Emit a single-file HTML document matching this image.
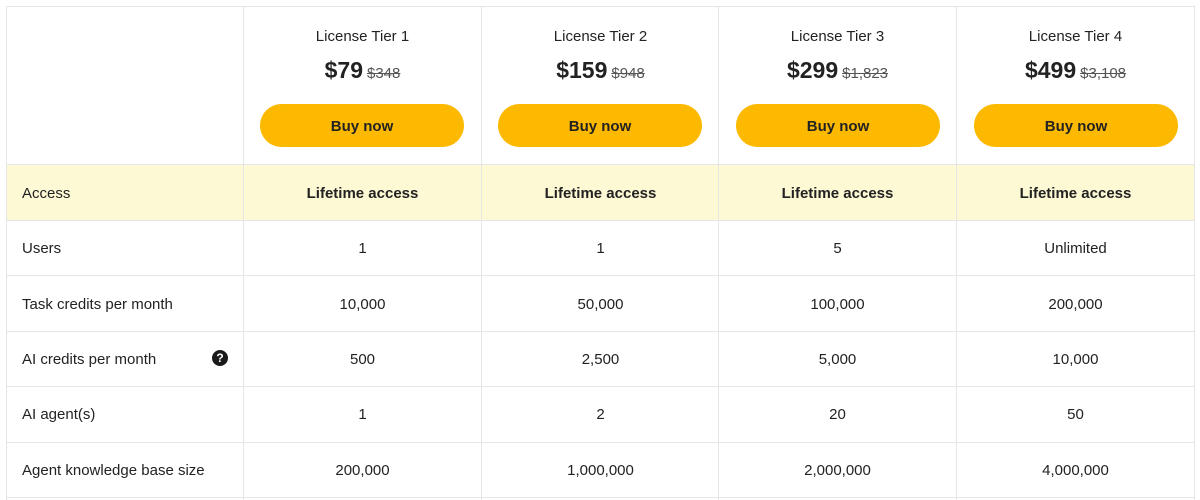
<!DOCTYPE html>
<html><head><style>
body{margin:0;width:1200px;height:500px;background:#fff;font-family:"Liberation Sans",Arial,sans-serif;color:#222;position:relative;overflow:hidden}
.v{position:absolute;top:6px;bottom:0;width:1px;background:#e6e6e6}
.h{position:absolute;left:6px;width:1188px;height:1px;background:#e6e6e6}
.hl{position:absolute;left:7px;width:1187px;top:165px;height:55px;background:#fef9d5}
.c{position:absolute;text-align:center;font-size:15px;line-height:20px;margin-top:2px}
.l{position:absolute;left:22px;font-size:15px;line-height:20px;margin-top:2px}
.t{position:absolute;text-align:center;font-size:15px;width:237px;top:28px}
.p{position:absolute;text-align:center;width:237px;top:57px;font-size:23px;font-weight:bold}
.p s{font-size:15px;font-weight:normal;color:#555;margin-left:4px}
.b{position:absolute;top:104px;width:204px;height:43px;border-radius:22px;background:#fdb900;text-align:center;line-height:46px;font-weight:bold;font-size:15px;color:#222}
.q{position:absolute;left:212px;top:350px;width:16px;height:16px;border-radius:50%;background:#1a1a1a;color:#fff;font-size:12px;font-weight:bold;text-align:center;line-height:16px}
</style></head><body>
<div class="hl"></div>
<div class="v" style="left:6px"></div><div class="v" style="left:243px"></div><div class="v" style="left:481px"></div><div class="v" style="left:718px"></div><div class="v" style="left:956px"></div><div class="v" style="left:1194px"></div>
<div class="h" style="top:6px"></div><div class="h" style="top:164px"></div><div class="h" style="top:220px"></div><div class="h" style="top:275px"></div><div class="h" style="top:331px"></div><div class="h" style="top:386px"></div><div class="h" style="top:442px"></div><div class="h" style="top:497px"></div>

<div class="t" style="left:244px">License Tier 1</div><div class="p" style="left:244px">$79<s>$348</s></div><div class="b" style="left:260px">Buy now</div>
<div class="t" style="left:482px">License Tier 2</div><div class="p" style="left:482px">$159<s>$948</s></div><div class="b" style="left:498px">Buy now</div>
<div class="t" style="left:719px">License Tier 3</div><div class="p" style="left:719px">$299<s>$1,823</s></div><div class="b" style="left:736px">Buy now</div>
<div class="t" style="left:957px">License Tier 4</div><div class="p" style="left:957px">$499<s>$3,108</s></div><div class="b" style="left:974px">Buy now</div>

<div class="l" style="top:182px">Access</div>
<div class="l" style="top:237px">Users</div>
<div class="l" style="top:293px">Task credits per month</div>
<div class="l" style="top:348px">AI credits per month</div><div class="q">?</div>
<div class="l" style="top:403px">AI agent(s)</div>
<div class="l" style="top:459px">Agent knowledge base size</div>

<div class="c" style="left:244px;width:237px;top:182px;font-weight:bold">Lifetime access</div>
<div class="c" style="left:482px;width:237px;top:182px;font-weight:bold">Lifetime access</div>
<div class="c" style="left:719px;width:237px;top:182px;font-weight:bold">Lifetime access</div>
<div class="c" style="left:957px;width:237px;top:182px;font-weight:bold">Lifetime access</div>

<div class="c" style="left:244px;width:237px;top:237px">1</div>
<div class="c" style="left:482px;width:237px;top:237px">1</div>
<div class="c" style="left:719px;width:237px;top:237px">5</div>
<div class="c" style="left:957px;width:237px;top:237px">Unlimited</div>

<div class="c" style="left:244px;width:237px;top:293px">10,000</div>
<div class="c" style="left:482px;width:237px;top:293px">50,000</div>
<div class="c" style="left:719px;width:237px;top:293px">100,000</div>
<div class="c" style="left:957px;width:237px;top:293px">200,000</div>

<div class="c" style="left:244px;width:237px;top:348px">500</div>
<div class="c" style="left:482px;width:237px;top:348px">2,500</div>
<div class="c" style="left:719px;width:237px;top:348px">5,000</div>
<div class="c" style="left:957px;width:237px;top:348px">10,000</div>

<div class="c" style="left:244px;width:237px;top:403px">1</div>
<div class="c" style="left:482px;width:237px;top:403px">2</div>
<div class="c" style="left:719px;width:237px;top:403px">20</div>
<div class="c" style="left:957px;width:237px;top:403px">50</div>

<div class="c" style="left:244px;width:237px;top:459px">200,000</div>
<div class="c" style="left:482px;width:237px;top:459px">1,000,000</div>
<div class="c" style="left:719px;width:237px;top:459px">2,000,000</div>
<div class="c" style="left:957px;width:237px;top:459px">4,000,000</div>
</body></html>
